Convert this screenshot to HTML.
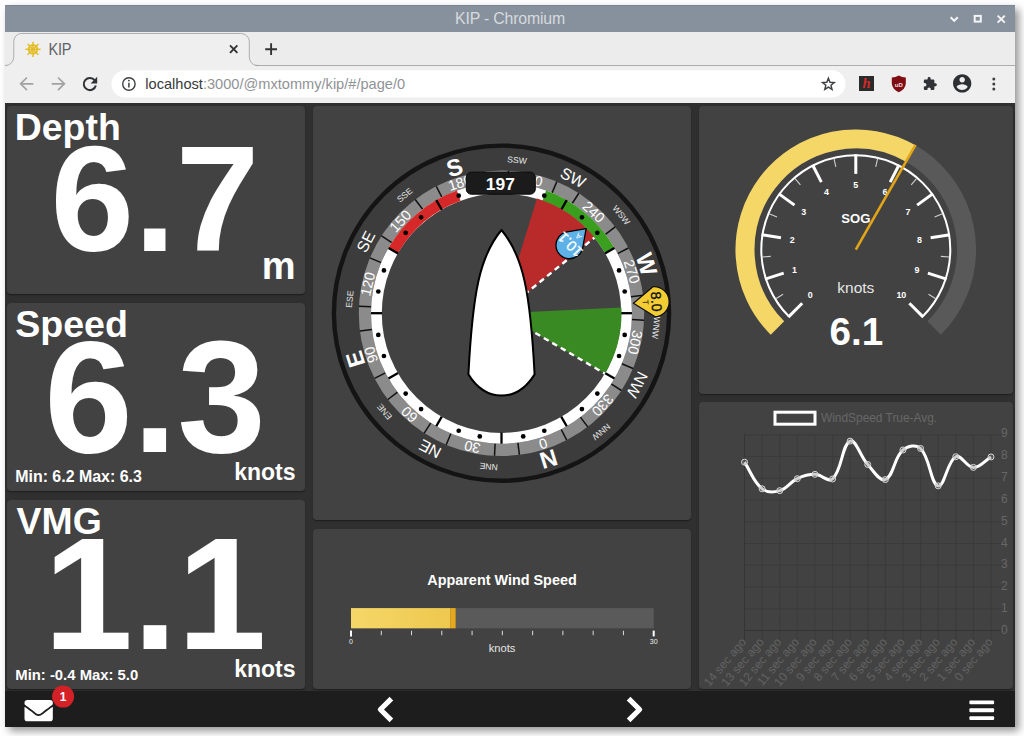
<!DOCTYPE html>
<html lang="en"><head><meta charset="utf-8"><title>KIP</title>
<style>
html,body{margin:0;padding:0;}
body{width:1024px;height:736px;overflow:hidden;background:#fff;position:relative;font-family:"Liberation Sans",sans-serif;}
.abs{position:absolute;}
#win{position:absolute;left:5px;top:5px;width:1010px;height:722px;background:#303030;box-shadow:4px 4px 8px 0px rgba(0,0,0,0.42);}
.panel{position:absolute;background:#424242;border-radius:4px;box-shadow:0 2px 1px -1px rgba(0,0,0,.2),0 1px 1px 0 rgba(0,0,0,.14),0 1px 3px 0 rgba(0,0,0,.12);}
svg{position:absolute;left:0;top:0;overflow:visible;}
.t{position:absolute;white-space:nowrap;color:#fff;font-weight:bold;line-height:1;}
</style></head>
<body>
<div id="win"></div>
<div class="abs" style="left:5px;top:5px;width:1010px;height:27.2px;background:#87919d;border-top:1px solid #7b8591;box-sizing:border-box;"></div>
<div class="abs" style="left:5px;top:5px;width:1010px;height:27.5px;line-height:28px;text-align:center;color:#d6dade;font-size:15.9px;letter-spacing:-0.2px;">KIP - Chromium</div>
<div class="abs" style="left:5px;top:32.2px;width:1010px;height:33.3px;background:#ececec;"></div>
<div class="abs" style="left:5px;top:65.5px;width:1010px;height:37.5px;background:#efefef;"></div>
<svg width="1024" height="736" viewBox="0 0 1024 736"><g fill="none" stroke="#f4f4f4" stroke-width="2"><path d="M950.6 17.3 L954.2 20.8 L957.8 17.3"/><rect x="974.7" y="15.9" width="6.1" height="5.7"/><path d="M997.6 15.6 L1004.8 22.6 M1004.8 15.6 L997.6 22.6"/></g><path d="M5 65.5 C10 65.5 13.8 62 13.8 56 L13.8 42 C13.8 37 17 33.5 22 33.5 L240.5 33.5 C245.5 33.5 249.3 37 249.3 42 L249.3 56 C249.3 62 252.5 65.5 258.5 65.5 L258.5 66.5 L5 66.5 Z" fill="#efefef"/><path d="M5 65.5 C10 65.5 13.8 62 13.8 56 L13.8 42 C13.8 37 17 33.5 22 33.5 L240.5 33.5 C245.5 33.5 249.3 37 249.3 42 L249.3 56 C249.3 62 252.5 65.5 258.5 65.5 L1015 65.5" fill="none" stroke="#adadad" stroke-width="1"/><g transform="translate(33 49.3)" stroke="#e3bd25" fill="none"><circle r="4.3" stroke-width="1.8"/><line x1="0" y1="0" x2="0.00" y2="-7.60" stroke-width="1.5"/><line x1="0" y1="0" x2="5.37" y2="-5.37" stroke-width="1.5"/><line x1="0" y1="0" x2="7.60" y2="-0.00" stroke-width="1.5"/><line x1="0" y1="0" x2="5.37" y2="5.37" stroke-width="1.5"/><line x1="0" y1="0" x2="0.00" y2="7.60" stroke-width="1.5"/><line x1="0" y1="0" x2="-5.37" y2="5.37" stroke-width="1.5"/><line x1="0" y1="0" x2="-7.60" y2="0.00" stroke-width="1.5"/><line x1="0" y1="0" x2="-5.37" y2="-5.37" stroke-width="1.5"/><circle r="1.6" fill="#e3bd25" stroke="none"/></g><path d="M230 45.4 L237.4 52.8 M237.4 45.4 L230 52.8" stroke="#333" stroke-width="1.9" fill="none"/><path d="M265.2 49.2 L277 49.2 M271.1 43.3 L271.1 55.1" stroke="#333" stroke-width="1.9" fill="none"/><g stroke="#a2a2a2" stroke-width="1.7" fill="none"><path d="M33.3 83.8 L20.8 83.8 M27 77.5 L20.6 83.8 L27 90.1"/><path d="M51.7 83.8 L64.2 83.8 M58 77.5 L64.4 83.8 L58 90.1"/></g><g transform="translate(89.8 84)"><path d="M5.0 -3.6 A6.1 6.1 0 1 0 6.0 1.4" stroke="#2f3337" stroke-width="2" fill="none"/><path d="M7.4 -7.2 L7.4 -0.6 L0.8 -0.6 Z" fill="#2f3337"/></g><rect x="111.5" y="70.3" width="734" height="27.2" rx="13.6" fill="#fff"/><circle cx="128.9" cy="84" r="6.2" fill="none" stroke="#3c4043" stroke-width="1.4"/><path d="M128.9 82.8 L128.9 87.4" stroke="#3c4043" stroke-width="1.5"/><circle cx="128.9" cy="80.6" r="0.9" fill="#3c4043"/><polygon points="828.40,78.20 829.99,82.22 834.30,82.48 830.97,85.23 832.04,89.42 828.40,87.10 824.76,89.42 825.83,85.23 822.50,82.48 826.81,82.22" fill="none" stroke="#3c4043" stroke-width="1.4" stroke-linejoin="miter"/><rect x="859" y="76" width="15" height="15" fill="#2b2b2b"/><text x="866.6" y="88.3" text-anchor="middle" font-family="Liberation Serif, serif" font-style="italic" font-weight="bold" font-size="14.5" fill="#d22a2a">h</text><path d="M891.8 77.6 Q895.5 77.4 898.8 75.6 Q902.1 77.4 905.8 77.6 L905.8 83.5 Q905.4 89.2 898.8 92.2 Q892.2 89.2 891.8 83.5 Z" fill="#800d12"/><text x="898.8" y="86.6" text-anchor="middle" font-family="Liberation Sans, sans-serif" font-weight="bold" font-size="6" fill="#f0e0e0">uD</text><g transform="translate(922.6 76.4) scale(0.62)" fill="#2f3337"><path d="M20.5 11H19V7c0-1.1-.9-2-2-2h-4V3.5C13 2.12 11.88 1 10.5 1S8 2.12 8 3.5V5H4c-1.1 0-1.99.9-1.99 2v3.8H3.5c1.49 0 2.7 1.21 2.7 2.7s-1.21 2.7-2.7 2.7H2V20c0 1.1.9 2 2 2h3.8v-1.5c0-1.49 1.21-2.7 2.7-2.7 1.49 0 2.7 1.21 2.7 2.7V22H17c1.1 0 2-.9 2-2v-4h1.5c1.38 0 2.500-1.12 2.500-2.500S21.88 11 20.5 11z"/></g><g transform="translate(951.2 72.4) scale(0.915)" fill="#2d3033"><path d="M12 2C6.48 2 2 6.48 2 12s4.480 10 10 10 10-4.480 10-10S17.52 2 12 2zm0 3c1.66 0 3 1.34 3 3s-1.34 3-3 3-3-1.34-3-3 1.34-3 3-3zm0 14.2c-2.500 0-4.710-1.280-6-3.220.03-1.990 4-3.080 6-3.080 1.990 0 5.970 1.090 6 3.080-1.290 1.940-3.500 3.220-6 3.220z"/></g><circle cx="993.8" cy="78.9" r="1.5" fill="#3c4043"/><circle cx="993.8" cy="84" r="1.5" fill="#3c4043"/><circle cx="993.8" cy="89.1" r="1.5" fill="#3c4043"/></svg>
<div class="abs" style="left:48.5px;top:38.6px;font-size:14.6px;color:#5f6368;line-height:20px;letter-spacing:-0.3px;transform:scaleY(1.14);transform-origin:0 50%;">KIP</div>
<div class="abs" style="left:145.3px;top:73.5px;font-size:14.6px;line-height:20px;color:#909396;white-space:nowrap;"><span style="color:#37393c">localhost</span>:3000/@mxtommy/kip/#/page/0</div>
<div class="abs" style="left:5px;top:103px;width:1010px;height:588px;background:#303030;"></div>
<div class="panel" style="left:7px;top:106px;width:298px;height:188px;"></div>
<div class="panel" style="left:7px;top:303px;width:298px;height:188px;"></div>
<div class="panel" style="left:7px;top:500px;width:298px;height:188.5px;"></div>
<div class="panel" style="left:312.5px;top:106px;width:378px;height:414px;"></div>
<div class="panel" style="left:312.5px;top:529px;width:378px;height:159.5px;"></div>
<div class="panel" style="left:698.5px;top:106px;width:314.5px;height:287.5px;"></div>
<div class="panel" style="left:698.5px;top:402px;width:314.5px;height:286.5px;"></div>
<svg width="1024" height="736" viewBox="0 0 1024 736" font-family="Liberation Sans, sans-serif" font-weight="bold" fill="#fff">
<text transform="translate(14.8 140) scale(1.0 1)" font-size="37.4" text-anchor="start">Depth</text>
<text transform="translate(154.9 250.8) scale(1.0 1)" font-size="150.3" text-anchor="middle">6.7</text>
<text transform="translate(295.6 279.2) scale(1.0 1)" font-size="38.0" text-anchor="end">m</text>
<text transform="translate(15.2 337.2) scale(1.0 1)" font-size="37.6" text-anchor="start">Speed</text>
<text transform="translate(155.0 452.1) scale(1.0 1)" font-size="159.3" text-anchor="middle">6.3</text>
<text transform="translate(295.5 480.1) scale(1.0 1)" font-size="23.0" text-anchor="end">knots</text>
<text transform="translate(15.2 482.2) scale(1.0 1)" font-size="15.95" text-anchor="start">Min: 6.2 Max: 6.3</text>
<text transform="translate(16.6 534.2) scale(1.0 1)" font-size="37.4" text-anchor="start">VMG</text>
<text transform="translate(155.1 648.7) scale(1.0 1)" font-size="160.3" text-anchor="middle">1.1</text>
<text transform="translate(295.5 677.1) scale(1.0 1)" font-size="23.0" text-anchor="end">knots</text>
<text transform="translate(15.3 679.7) scale(1.0 1)" font-size="14.85" text-anchor="start">Min: -0.4 Max: 5.0</text>
</svg>
<svg width="1024" height="736" viewBox="0 0 1024 736" font-family="Liberation Sans, sans-serif">
<g transform="translate(501.5 313.2)">
<circle r="167.6" fill="#3c3c3c" stroke="#141414" stroke-width="4.4"/>
<circle r="120.2" fill="#424242"/>
<circle r="136.6" fill="none" stroke="#8b8b8b" stroke-width="12.199999999999989"/>
<g transform="rotate(-197.2)">
<text transform="rotate(0)" x="-1.2" y="-131.9" text-anchor="middle" font-size="14.4" fill="#fff">0</text>
<line transform="rotate(10)" x1="0" y1="-130.5" x2="0" y2="-142.7" stroke="#111" stroke-width="1.5"/>
<line transform="rotate(20)" x1="0" y1="-130.5" x2="0" y2="-142.7" stroke="#111" stroke-width="1.5"/>
<text transform="rotate(30)" x="-1.2" y="-131.9" text-anchor="middle" font-size="14.4" fill="#fff">30</text>
<line transform="rotate(40)" x1="0" y1="-130.5" x2="0" y2="-142.7" stroke="#111" stroke-width="1.5"/>
<line transform="rotate(50)" x1="0" y1="-130.5" x2="0" y2="-142.7" stroke="#111" stroke-width="1.5"/>
<text transform="rotate(60)" x="-1.2" y="-131.9" text-anchor="middle" font-size="14.4" fill="#fff">60</text>
<line transform="rotate(70)" x1="0" y1="-130.5" x2="0" y2="-142.7" stroke="#111" stroke-width="1.5"/>
<line transform="rotate(80)" x1="0" y1="-130.5" x2="0" y2="-142.7" stroke="#111" stroke-width="1.5"/>
<text transform="rotate(90)" x="-1.2" y="-131.9" text-anchor="middle" font-size="14.4" fill="#fff">90</text>
<line transform="rotate(100)" x1="0" y1="-130.5" x2="0" y2="-142.7" stroke="#111" stroke-width="1.5"/>
<line transform="rotate(110)" x1="0" y1="-130.5" x2="0" y2="-142.7" stroke="#111" stroke-width="1.5"/>
<text transform="rotate(120)" x="-1.2" y="-131.9" text-anchor="middle" font-size="14.4" fill="#fff">120</text>
<line transform="rotate(130)" x1="0" y1="-130.5" x2="0" y2="-142.7" stroke="#111" stroke-width="1.5"/>
<line transform="rotate(140)" x1="0" y1="-130.5" x2="0" y2="-142.7" stroke="#111" stroke-width="1.5"/>
<text transform="rotate(150)" x="-1.2" y="-131.9" text-anchor="middle" font-size="14.4" fill="#fff">150</text>
<line transform="rotate(160)" x1="0" y1="-130.5" x2="0" y2="-142.7" stroke="#111" stroke-width="1.5"/>
<line transform="rotate(170)" x1="0" y1="-130.5" x2="0" y2="-142.7" stroke="#111" stroke-width="1.5"/>
<text transform="rotate(180)" x="-1.2" y="-131.9" text-anchor="middle" font-size="14.4" fill="#fff">180</text>
<line transform="rotate(190)" x1="0" y1="-130.5" x2="0" y2="-142.7" stroke="#111" stroke-width="1.5"/>
<line transform="rotate(200)" x1="0" y1="-130.5" x2="0" y2="-142.7" stroke="#111" stroke-width="1.5"/>
<text transform="rotate(210)" x="-1.2" y="-131.9" text-anchor="middle" font-size="14.4" fill="#fff">210</text>
<line transform="rotate(220)" x1="0" y1="-130.5" x2="0" y2="-142.7" stroke="#111" stroke-width="1.5"/>
<line transform="rotate(230)" x1="0" y1="-130.5" x2="0" y2="-142.7" stroke="#111" stroke-width="1.5"/>
<text transform="rotate(240)" x="-1.2" y="-131.9" text-anchor="middle" font-size="14.4" fill="#fff">240</text>
<line transform="rotate(250)" x1="0" y1="-130.5" x2="0" y2="-142.7" stroke="#111" stroke-width="1.5"/>
<line transform="rotate(260)" x1="0" y1="-130.5" x2="0" y2="-142.7" stroke="#111" stroke-width="1.5"/>
<text transform="rotate(270)" x="-1.2" y="-131.9" text-anchor="middle" font-size="14.4" fill="#fff">270</text>
<line transform="rotate(280)" x1="0" y1="-130.5" x2="0" y2="-142.7" stroke="#111" stroke-width="1.5"/>
<line transform="rotate(290)" x1="0" y1="-130.5" x2="0" y2="-142.7" stroke="#111" stroke-width="1.5"/>
<text transform="rotate(300)" x="-1.2" y="-131.9" text-anchor="middle" font-size="14.4" fill="#fff">300</text>
<line transform="rotate(310)" x1="0" y1="-130.5" x2="0" y2="-142.7" stroke="#111" stroke-width="1.5"/>
<line transform="rotate(320)" x1="0" y1="-130.5" x2="0" y2="-142.7" stroke="#111" stroke-width="1.5"/>
<text transform="rotate(330)" x="-1.2" y="-131.9" text-anchor="middle" font-size="14.4" fill="#fff">330</text>
<line transform="rotate(340)" x1="0" y1="-130.5" x2="0" y2="-142.7" stroke="#111" stroke-width="1.5"/>
<line transform="rotate(350)" x1="0" y1="-130.5" x2="0" y2="-142.7" stroke="#111" stroke-width="1.5"/>
<text transform="rotate(0.0)" x="-1.9" y="-145" text-anchor="middle" font-size="23.5" font-weight="bold" fill="#fff">N</text>
<text transform="rotate(45.0)" x="0" y="-147.8" text-anchor="middle" font-size="16" fill="#fff">NE</text>
<text transform="rotate(90.0)" x="-0.8" y="-145" text-anchor="middle" font-size="23.5" font-weight="bold" fill="#fff">E</text>
<text transform="rotate(135.0)" x="0" y="-147.8" text-anchor="middle" font-size="16" fill="#fff">SE</text>
<text transform="rotate(180.0)" x="-1.6" y="-145" text-anchor="middle" font-size="23.5" font-weight="bold" fill="#fff">S</text>
<text transform="rotate(225.0)" x="0" y="-147.8" text-anchor="middle" font-size="16" fill="#fff">SW</text>
<text transform="rotate(270.0)" x="-4.0" y="-145" text-anchor="middle" font-size="23.5" font-weight="bold" fill="#fff">W</text>
<text transform="rotate(315.0)" x="0" y="-147.8" text-anchor="middle" font-size="16" fill="#fff">NW</text>
</g>
<g transform="translate(1.4 0.2) rotate(-197.2)">
<text transform="rotate(22.5)" x="0" y="-150.9" text-anchor="middle" font-size="8.6" fill="#e8e8e8">NNE</text>
<text transform="rotate(67.5)" x="0" y="-150.9" text-anchor="middle" font-size="8.6" fill="#e8e8e8">ENE</text>
<text transform="rotate(112.5)" x="0" y="-150.9" text-anchor="middle" font-size="8.6" fill="#e8e8e8">ESE</text>
<text transform="rotate(157.5)" x="0" y="-150.9" text-anchor="middle" font-size="8.6" fill="#e8e8e8">SSE</text>
<text transform="rotate(202.5)" x="0" y="-150.9" text-anchor="middle" font-size="8.6" fill="#e8e8e8">SSW</text>
<text transform="rotate(247.5)" x="0" y="-150.9" text-anchor="middle" font-size="8.6" fill="#e8e8e8">WSW</text>
<text transform="rotate(292.5)" x="0" y="-150.9" text-anchor="middle" font-size="8.6" fill="#e8e8e8">WNW</text>
<text transform="rotate(337.5)" x="0" y="-150.9" text-anchor="middle" font-size="8.6" fill="#e8e8e8">NNW</text>
</g>
<circle r="125.1" fill="none" stroke="#fff" stroke-width="10.799999999999997"/>
<path d="M-108.34 -62.55 A125.1 125.1 0 0 1 -42.79 -117.56" fill="none" stroke="#d62828" stroke-width="10.799999999999997"/>
<path d="M42.79 -117.56 A125.1 125.1 0 0 1 108.34 -62.55" fill="none" stroke="#3a9e1f" stroke-width="10.799999999999997"/>
<line transform="rotate(0)" x1="0" y1="-119.4" x2="0" y2="-130.5" stroke="#000" stroke-width="2.3"/>
<circle cx="21.72" cy="-123.20" r="2.35" fill="#000"/>
<circle cx="42.79" cy="-117.56" r="2.35" fill="#000"/>
<line transform="rotate(30)" x1="0" y1="-119.4" x2="0" y2="-130.5" stroke="#000" stroke-width="2.3"/>
<circle cx="80.41" cy="-95.83" r="2.35" fill="#000"/>
<circle cx="95.83" cy="-80.41" r="2.35" fill="#000"/>
<line transform="rotate(60)" x1="0" y1="-119.4" x2="0" y2="-130.5" stroke="#000" stroke-width="2.3"/>
<circle cx="117.56" cy="-42.79" r="2.35" fill="#000"/>
<circle cx="123.20" cy="-21.72" r="2.35" fill="#000"/>
<line transform="rotate(90)" x1="0" y1="-119.4" x2="0" y2="-130.5" stroke="#000" stroke-width="2.3"/>
<circle cx="123.20" cy="21.72" r="2.35" fill="#000"/>
<circle cx="117.56" cy="42.79" r="2.35" fill="#000"/>
<line transform="rotate(120)" x1="0" y1="-119.4" x2="0" y2="-130.5" stroke="#000" stroke-width="2.3"/>
<circle cx="95.83" cy="80.41" r="2.35" fill="#000"/>
<circle cx="80.41" cy="95.83" r="2.35" fill="#000"/>
<line transform="rotate(150)" x1="0" y1="-119.4" x2="0" y2="-130.5" stroke="#000" stroke-width="2.3"/>
<circle cx="42.79" cy="117.56" r="2.35" fill="#000"/>
<circle cx="21.72" cy="123.20" r="2.35" fill="#000"/>
<line transform="rotate(180)" x1="0" y1="-119.4" x2="0" y2="-130.5" stroke="#000" stroke-width="2.3"/>
<circle cx="-21.72" cy="123.20" r="2.35" fill="#000"/>
<circle cx="-42.79" cy="117.56" r="2.35" fill="#000"/>
<line transform="rotate(210)" x1="0" y1="-119.4" x2="0" y2="-130.5" stroke="#000" stroke-width="2.3"/>
<circle cx="-80.41" cy="95.83" r="2.35" fill="#000"/>
<circle cx="-95.83" cy="80.41" r="2.35" fill="#000"/>
<line transform="rotate(240)" x1="0" y1="-119.4" x2="0" y2="-130.5" stroke="#000" stroke-width="2.3"/>
<circle cx="-117.56" cy="42.79" r="2.35" fill="#000"/>
<circle cx="-123.20" cy="21.72" r="2.35" fill="#000"/>
<line transform="rotate(270)" x1="0" y1="-119.4" x2="0" y2="-130.5" stroke="#000" stroke-width="2.3"/>
<circle cx="-123.20" cy="-21.72" r="2.35" fill="#000"/>
<circle cx="-117.56" cy="-42.79" r="2.35" fill="#000"/>
<line transform="rotate(300)" x1="0" y1="-119.4" x2="0" y2="-130.5" stroke="#000" stroke-width="2.3"/>
<circle cx="-95.83" cy="-80.41" r="2.35" fill="#000"/>
<circle cx="-80.41" cy="-95.83" r="2.35" fill="#000"/>
<line transform="rotate(330)" x1="0" y1="-119.4" x2="0" y2="-130.5" stroke="#000" stroke-width="2.3"/>
<circle cx="-42.79" cy="-117.56" r="2.35" fill="#000"/>
<circle cx="-21.72" cy="-123.20" r="2.35" fill="#000"/>
<path d="M0 0 L35.48 -114.63 A120.0 120.0 0 0 1 93.13 -75.68 Z" fill="#b92b2b"/>
<path d="M0 0 L119.87 -5.65 A120.0 120.0 0 0 1 103.61 60.54 Z" fill="#3a8a24"/>
<line x1="0" y1="0" x2="92.89" y2="-75.49" stroke="#fff" stroke-width="2.4" stroke-dasharray="5.6 4.2"/>
<line x1="0" y1="0" x2="103.35" y2="60.39" stroke="#fff" stroke-width="2.4" stroke-dasharray="5.6 4.2"/>
<path d="M0 -83.2 C-21.8 -57.2 -28.8 -20.5 -33.1 61.2 Q-20 82.4 0 82.4 Q20 82.4 33.1 61.2 C28.8 -20.5 21.8 -57.2 0 -83.2 Z" fill="#fff" stroke="#000" stroke-width="2" stroke-linejoin="round"/>
<g transform="rotate(45.0)">
<path d="M0 -119.70 L11.07 -103.82 A13.5 13.5 0 1 1 -11.07 -103.82 Z" fill="#5eb1e6" stroke="#000" stroke-width="1.3" stroke-linejoin="round"/>
<g transform="translate(0 -119.70) rotate(180)">
<text x="0" y="-17.5" text-anchor="middle" font-size="14.6" fill="#fff" stroke="#fff" stroke-width="0.3">10.1</text>
<text x="0" y="-8.2" text-anchor="middle" font-size="8" fill="#fff">A</text>
</g></g>
<g transform="rotate(85.7)">
<path d="M0 -132.3 L15.1 -153.0 A15.1 15.1 0 1 0 -15.1 -153.0 Z" fill="#f3cd33" stroke="#111" stroke-width="1.3" stroke-linejoin="round"/>
<text x="0" y="-150.30" text-anchor="middle" font-size="14.2" fill="#111" stroke="#111" stroke-width="0.35">8.0</text>
<text x="0" y="-141.60" text-anchor="middle" font-size="8.2" fill="#111">T</text>
</g>
<rect x="-35.2" y="-141.0" width="69" height="22" rx="5" fill="#1b1b1b" stroke="#0a0a0a" stroke-width="1"/>
<text transform="translate(-1.2 -123.4)" text-anchor="middle" font-size="17.4" font-weight="bold" fill="#fff">197</text>
</g>
<path d="M777.45 328.05 A110.8 110.8 0 1 1 934.15 328.05" fill="none" stroke="#595959" stroke-width="19.0" />
<path d="M777.45 328.05 A110.8 110.8 0 0 1 910.70 153.46" fill="none" stroke="#f4d766" stroke-width="19.0" />
<path d="M788.98 316.52 A94.5 94.5 0 1 1 922.62 316.52" fill="none" stroke="#fff" stroke-width="2" />
<line x1="788.34" y1="317.16" x2="802.20" y2="303.30" stroke="#fff" stroke-width="3"/>
<text x="810.26" y="298.24" text-anchor="middle" font-size="8.9" font-weight="bold" fill="#fff">0</text>
<line x1="775.82" y1="298.71" x2="783.07" y2="294.27" stroke="#d0d0d0" stroke-width="1.1"/>
<line x1="765.07" y1="279.18" x2="783.71" y2="273.12" stroke="#fff" stroke-width="3"/>
<text x="794.55" y="272.60" text-anchor="middle" font-size="8.9" font-weight="bold" fill="#fff">1</text>
<line x1="762.29" y1="257.06" x2="770.76" y2="256.39" stroke="#d0d0d0" stroke-width="1.1"/>
<line x1="761.57" y1="234.78" x2="780.93" y2="237.84" stroke="#fff" stroke-width="3"/>
<text x="792.19" y="242.63" text-anchor="middle" font-size="8.9" font-weight="bold" fill="#fff">2</text>
<line x1="769.14" y1="213.80" x2="776.99" y2="217.06" stroke="#d0d0d0" stroke-width="1.1"/>
<line x1="778.62" y1="193.63" x2="794.48" y2="205.15" stroke="#fff" stroke-width="3"/>
<text x="803.70" y="214.85" text-anchor="middle" font-size="8.9" font-weight="bold" fill="#fff">3</text>
<line x1="794.88" y1="178.37" x2="800.40" y2="184.84" stroke="#d0d0d0" stroke-width="1.1"/>
<line x1="812.49" y1="164.70" x2="821.39" y2="182.16" stroke="#fff" stroke-width="3"/>
<text x="826.56" y="195.32" text-anchor="middle" font-size="8.9" font-weight="bold" fill="#fff">4</text>
<line x1="833.90" y1="158.49" x2="835.89" y2="166.76" stroke="#d0d0d0" stroke-width="1.1"/>
<line x1="855.80" y1="154.30" x2="855.80" y2="173.90" stroke="#fff" stroke-width="3"/>
<text x="855.80" y="188.30" text-anchor="middle" font-size="8.9" font-weight="bold" fill="#fff">5</text>
<line x1="877.70" y1="158.49" x2="875.71" y2="166.76" stroke="#d0d0d0" stroke-width="1.1"/>
<line x1="899.11" y1="164.70" x2="890.21" y2="182.16" stroke="#fff" stroke-width="3"/>
<text x="885.04" y="195.32" text-anchor="middle" font-size="8.9" font-weight="bold" fill="#fff">6</text>
<line x1="916.72" y1="178.37" x2="911.20" y2="184.84" stroke="#d0d0d0" stroke-width="1.1"/>
<line x1="932.98" y1="193.63" x2="917.12" y2="205.15" stroke="#fff" stroke-width="3"/>
<text x="907.90" y="214.85" text-anchor="middle" font-size="8.9" font-weight="bold" fill="#fff">7</text>
<line x1="942.46" y1="213.80" x2="934.61" y2="217.06" stroke="#d0d0d0" stroke-width="1.1"/>
<line x1="950.03" y1="234.78" x2="930.67" y2="237.84" stroke="#fff" stroke-width="3"/>
<text x="919.41" y="242.63" text-anchor="middle" font-size="8.9" font-weight="bold" fill="#fff">8</text>
<line x1="949.31" y1="257.06" x2="940.84" y2="256.39" stroke="#d0d0d0" stroke-width="1.1"/>
<line x1="946.53" y1="279.18" x2="927.89" y2="273.12" stroke="#fff" stroke-width="3"/>
<text x="917.05" y="272.60" text-anchor="middle" font-size="8.9" font-weight="bold" fill="#fff">9</text>
<line x1="935.78" y1="298.71" x2="928.53" y2="294.27" stroke="#d0d0d0" stroke-width="1.1"/>
<line x1="923.26" y1="317.16" x2="909.40" y2="303.30" stroke="#fff" stroke-width="3"/>
<text x="901.34" y="298.24" text-anchor="middle" font-size="8.9" font-weight="bold" fill="#fff">10</text>
<text x="855.8" y="223.1" text-anchor="middle" font-size="13.1" font-weight="bold" fill="#fff">SOG</text>
<text x="855.8" y="293.1" text-anchor="middle" font-size="15.5" fill="#e6e6e6">knots</text>
<text x="856.3" y="344.8" text-anchor="middle" font-size="38.6" font-weight="bold" fill="#fff">6.1</text>
<line x1="855.8" y1="249.7" x2="915.55" y2="144.94" stroke="#e3a518" stroke-width="2.6"/>
<line x1="744.50" y1="434.75" x2="744.50" y2="640.5" stroke="#3b3b3b" stroke-width="1"/>
<line x1="762.11" y1="434.75" x2="762.11" y2="640.5" stroke="#3b3b3b" stroke-width="1"/>
<line x1="779.71" y1="434.75" x2="779.71" y2="640.5" stroke="#3b3b3b" stroke-width="1"/>
<line x1="797.32" y1="434.75" x2="797.32" y2="640.5" stroke="#3b3b3b" stroke-width="1"/>
<line x1="814.93" y1="434.75" x2="814.93" y2="640.5" stroke="#3b3b3b" stroke-width="1"/>
<line x1="832.54" y1="434.75" x2="832.54" y2="640.5" stroke="#3b3b3b" stroke-width="1"/>
<line x1="850.14" y1="434.75" x2="850.14" y2="640.5" stroke="#3b3b3b" stroke-width="1"/>
<line x1="867.75" y1="434.75" x2="867.75" y2="640.5" stroke="#3b3b3b" stroke-width="1"/>
<line x1="885.36" y1="434.75" x2="885.36" y2="640.5" stroke="#3b3b3b" stroke-width="1"/>
<line x1="902.96" y1="434.75" x2="902.96" y2="640.5" stroke="#3b3b3b" stroke-width="1"/>
<line x1="920.57" y1="434.75" x2="920.57" y2="640.5" stroke="#3b3b3b" stroke-width="1"/>
<line x1="938.18" y1="434.75" x2="938.18" y2="640.5" stroke="#3b3b3b" stroke-width="1"/>
<line x1="955.79" y1="434.75" x2="955.79" y2="640.5" stroke="#3b3b3b" stroke-width="1"/>
<line x1="973.39" y1="434.75" x2="973.39" y2="640.5" stroke="#3b3b3b" stroke-width="1"/>
<line x1="991.00" y1="434.75" x2="991.00" y2="640.5" stroke="#3b3b3b" stroke-width="1"/>
<line x1="744.5" y1="630.50" x2="1001.0" y2="630.50" stroke="#333" stroke-width="1"/>
<text x="1001" y="634.07" font-size="12" fill="#676767">0</text>
<line x1="744.5" y1="608.75" x2="1001.0" y2="608.75" stroke="#3b3b3b" stroke-width="1"/>
<text x="1001" y="612.19" font-size="12" fill="#676767">1</text>
<line x1="744.5" y1="587.00" x2="1001.0" y2="587.00" stroke="#3b3b3b" stroke-width="1"/>
<text x="1001" y="590.31" font-size="12" fill="#676767">2</text>
<line x1="744.5" y1="565.25" x2="1001.0" y2="565.25" stroke="#3b3b3b" stroke-width="1"/>
<text x="1001" y="568.43" font-size="12" fill="#676767">3</text>
<line x1="744.5" y1="543.50" x2="1001.0" y2="543.50" stroke="#3b3b3b" stroke-width="1"/>
<text x="1001" y="546.55" font-size="12" fill="#676767">4</text>
<line x1="744.5" y1="521.75" x2="1001.0" y2="521.75" stroke="#3b3b3b" stroke-width="1"/>
<text x="1001" y="524.67" font-size="12" fill="#676767">5</text>
<line x1="744.5" y1="500.00" x2="1001.0" y2="500.00" stroke="#3b3b3b" stroke-width="1"/>
<text x="1001" y="502.79" font-size="12" fill="#676767">6</text>
<line x1="744.5" y1="478.25" x2="1001.0" y2="478.25" stroke="#3b3b3b" stroke-width="1"/>
<text x="1001" y="480.91" font-size="12" fill="#676767">7</text>
<line x1="744.5" y1="456.50" x2="1001.0" y2="456.50" stroke="#3b3b3b" stroke-width="1"/>
<text x="1001" y="459.03" font-size="12" fill="#676767">8</text>
<line x1="744.5" y1="434.75" x2="1001.0" y2="434.75" stroke="#3b3b3b" stroke-width="1"/>
<text x="1001" y="437.15" font-size="12" fill="#676767">9</text>
<line x1="744.5" y1="434.75" x2="744.5" y2="640.5" stroke="#353535" stroke-width="1"/>
<text transform="translate(743.70 639.5) rotate(-50)" text-anchor="end" y="4.2" font-size="12" fill="#636363">14 sec ago</text>
<text transform="translate(761.31 639.5) rotate(-50)" text-anchor="end" y="4.2" font-size="12" fill="#636363">13 sec ago</text>
<text transform="translate(778.91 639.5) rotate(-50)" text-anchor="end" y="4.2" font-size="12" fill="#636363">12 sec ago</text>
<text transform="translate(796.52 639.5) rotate(-50)" text-anchor="end" y="4.2" font-size="12" fill="#636363">11 sec ago</text>
<text transform="translate(814.13 639.5) rotate(-50)" text-anchor="end" y="4.2" font-size="12" fill="#636363">10 sec ago</text>
<text transform="translate(831.74 639.5) rotate(-50)" text-anchor="end" y="4.2" font-size="12" fill="#636363">9 sec ago</text>
<text transform="translate(849.34 639.5) rotate(-50)" text-anchor="end" y="4.2" font-size="12" fill="#636363">8 sec ago</text>
<text transform="translate(866.95 639.5) rotate(-50)" text-anchor="end" y="4.2" font-size="12" fill="#636363">7 sec ago</text>
<text transform="translate(884.56 639.5) rotate(-50)" text-anchor="end" y="4.2" font-size="12" fill="#636363">6 sec ago</text>
<text transform="translate(902.16 639.5) rotate(-50)" text-anchor="end" y="4.2" font-size="12" fill="#636363">5 sec ago</text>
<text transform="translate(919.77 639.5) rotate(-50)" text-anchor="end" y="4.2" font-size="12" fill="#636363">4 sec ago</text>
<text transform="translate(937.38 639.5) rotate(-50)" text-anchor="end" y="4.2" font-size="12" fill="#636363">3 sec ago</text>
<text transform="translate(954.99 639.5) rotate(-50)" text-anchor="end" y="4.2" font-size="12" fill="#636363">2 sec ago</text>
<text transform="translate(972.59 639.5) rotate(-50)" text-anchor="end" y="4.2" font-size="12" fill="#636363">1 sec ago</text>
<text transform="translate(990.20 639.5) rotate(-50)" text-anchor="end" y="4.2" font-size="12" fill="#636363">0 sec ago</text>
<rect x="775" y="412.2" width="40" height="12" fill="none" stroke="#fff" stroke-width="3"/>
<text x="821" y="421.8" font-size="11.9" fill="#676767">WindSpeed True-Avg.</text>
<path d="M744.50 462.15 C751.54 472.81 753.05 481.47 762.11 488.80 C767.13 492.86 773.32 492.48 779.71 490.65 C787.40 488.44 789.72 482.21 797.32 478.69 C803.80 475.68 807.90 474.27 814.93 474.34 C821.99 474.40 828.26 483.05 832.54 479.01 C842.35 469.75 841.86 444.50 850.14 441.10 C855.95 438.72 859.88 455.95 867.75 464.55 C873.96 471.33 879.70 481.90 885.36 479.55 C893.78 476.07 893.66 458.20 902.96 449.98 C907.74 445.75 916.35 444.15 920.57 448.45 C930.44 458.51 930.45 484.05 938.18 485.86 C944.54 487.36 947.01 461.33 955.79 456.72 C961.09 453.93 966.33 467.33 973.39 467.38 C980.42 467.42 983.96 461.11 991.00 456.94" fill="none" stroke="#fff" stroke-width="3" stroke-linejoin="round" stroke-linecap="butt"/>
<circle cx="744.50" cy="462.15" r="3" fill="rgba(120,120,120,0.35)" stroke="#d9d9d9" stroke-width="1"/>
<circle cx="762.11" cy="488.80" r="3" fill="rgba(120,120,120,0.35)" stroke="#d9d9d9" stroke-width="1"/>
<circle cx="779.71" cy="490.65" r="3" fill="rgba(120,120,120,0.35)" stroke="#d9d9d9" stroke-width="1"/>
<circle cx="797.32" cy="478.69" r="3" fill="rgba(120,120,120,0.35)" stroke="#d9d9d9" stroke-width="1"/>
<circle cx="814.93" cy="474.34" r="3" fill="rgba(120,120,120,0.35)" stroke="#d9d9d9" stroke-width="1"/>
<circle cx="832.54" cy="479.01" r="3" fill="rgba(120,120,120,0.35)" stroke="#d9d9d9" stroke-width="1"/>
<circle cx="850.14" cy="441.10" r="3" fill="rgba(120,120,120,0.35)" stroke="#d9d9d9" stroke-width="1"/>
<circle cx="867.75" cy="464.55" r="3" fill="rgba(120,120,120,0.35)" stroke="#d9d9d9" stroke-width="1"/>
<circle cx="885.36" cy="479.55" r="3" fill="rgba(120,120,120,0.35)" stroke="#d9d9d9" stroke-width="1"/>
<circle cx="902.96" cy="449.98" r="3" fill="rgba(120,120,120,0.35)" stroke="#d9d9d9" stroke-width="1"/>
<circle cx="920.57" cy="448.45" r="3" fill="rgba(120,120,120,0.35)" stroke="#d9d9d9" stroke-width="1"/>
<circle cx="938.18" cy="485.86" r="3" fill="rgba(120,120,120,0.35)" stroke="#d9d9d9" stroke-width="1"/>
<circle cx="955.79" cy="456.72" r="3" fill="rgba(120,120,120,0.35)" stroke="#d9d9d9" stroke-width="1"/>
<circle cx="973.39" cy="467.38" r="3" fill="rgba(120,120,120,0.35)" stroke="#d9d9d9" stroke-width="1"/>
<circle cx="991.00" cy="456.94" r="3" fill="rgba(120,120,120,0.35)" stroke="#d9d9d9" stroke-width="1"/>
</svg>
<svg width="1024" height="736" viewBox="0 0 1024 736" font-family="Liberation Sans, sans-serif">
<defs><linearGradient id="wg" x1="0" x2="1" y1="0" y2="0"><stop offset="0" stop-color="#f5d768"/><stop offset="1" stop-color="#eec84f"/></linearGradient></defs>
<text x="502" y="585.4" text-anchor="middle" font-size="14.4" font-weight="bold" fill="#fff">Apparent Wind Speed</text>
<rect x="351.0" y="608.1" width="302.70000000000005" height="20.2" fill="#5a5a5a"/>
<rect x="351.0" y="608.1" width="99.41" height="20.2" fill="url(#wg)"/>
<rect x="450.31" y="608.1" width="5.3" height="20.2" fill="#e6a91b"/>
<line x1="351.00" y1="630.6" x2="351.00" y2="636.4" stroke="#fff" stroke-width="2"/>
<line x1="381.27" y1="630.8" x2="381.27" y2="635.2" stroke="#ddd" stroke-width="1"/>
<line x1="411.54" y1="630.8" x2="411.54" y2="635.2" stroke="#ddd" stroke-width="1"/>
<line x1="441.81" y1="630.8" x2="441.81" y2="635.2" stroke="#ddd" stroke-width="1"/>
<line x1="472.08" y1="630.8" x2="472.08" y2="635.2" stroke="#ddd" stroke-width="1"/>
<line x1="502.35" y1="630.8" x2="502.35" y2="635.2" stroke="#ddd" stroke-width="1"/>
<line x1="532.62" y1="630.8" x2="532.62" y2="635.2" stroke="#ddd" stroke-width="1"/>
<line x1="562.89" y1="630.8" x2="562.89" y2="635.2" stroke="#ddd" stroke-width="1"/>
<line x1="593.16" y1="630.8" x2="593.16" y2="635.2" stroke="#ddd" stroke-width="1"/>
<line x1="623.43" y1="630.8" x2="623.43" y2="635.2" stroke="#ddd" stroke-width="1"/>
<line x1="653.70" y1="630.6" x2="653.70" y2="636.4" stroke="#fff" stroke-width="2"/>
<text x="351.0" y="644.3" text-anchor="middle" font-size="7" fill="#eee">0</text>
<text x="653.7" y="644.3" text-anchor="middle" font-size="7" fill="#eee">30</text>
<text x="502" y="652" text-anchor="middle" font-size="11.2" fill="#e4e4e4">knots</text>
</svg>
<div class="abs" style="left:5px;top:690.8px;width:1010px;height:36.2px;background:#1d1d1d;"></div>
<svg width="1024" height="736" viewBox="0 0 1024 736" font-family="Liberation Sans, sans-serif">
<g transform="translate(24.5 696.55) scale(0.0553)" fill="#fff"><path d="M502.3 190.8c3.900-3.100 9.700-.2 9.700 4.700V400c0 26.500-21.500 48-48 48H48c-26.500 0-48-21.500-48-48V195.600c0-5 5.700-7.800 9.700-4.700 22.400 17.400 52.100 39.500 154.100 113.600 21.100 15.400 56.700 47.800 92.200 47.600 35.700.3 72-32.800 92.300-47.600 102-74.100 131.600-96.300 154-113.700zM256 320c23.200.4 56.600-29.200 73.400-41.400 132.700-96.300 142.800-104.700 173.400-128.700 5.800-4.500 9.200-11.500 9.200-18.900v-19c0-26.500-21.500-48-48-48H48C21.500 64 0 85.500 0 112v19c0 7.400 3.400 14.300 9.200 18.900 30.600 23.900 40.700 32.400 173.400 128.700 16.800 12.200 50.200 41.800 73.400 41.400z"/></g>
<circle cx="63.1" cy="696.6" r="11" fill="#d42027"/>
<text x="63.1" y="700.9" text-anchor="middle" font-size="12" font-weight="bold" fill="#fff">1</text>
<path d="M391.4 698.6 L380.4 709.5 L391.4 720.4" fill="none" stroke="#fff" stroke-width="5.2" stroke-linecap="butt" stroke-linejoin="round"/>
<path d="M628.6 698.6 L639.6 709.5 L628.6 720.4" fill="none" stroke="#fff" stroke-width="5.2" stroke-linecap="butt" stroke-linejoin="round"/>
<rect x="969.4" y="700.45" width="24.7" height="3.9" rx="1" fill="#fff"/>
<rect x="969.4" y="708.3" width="24.7" height="3.9" rx="1" fill="#fff"/>
<rect x="969.4" y="716.2" width="24.7" height="3.9" rx="1" fill="#fff"/>
</svg>
</body></html>
